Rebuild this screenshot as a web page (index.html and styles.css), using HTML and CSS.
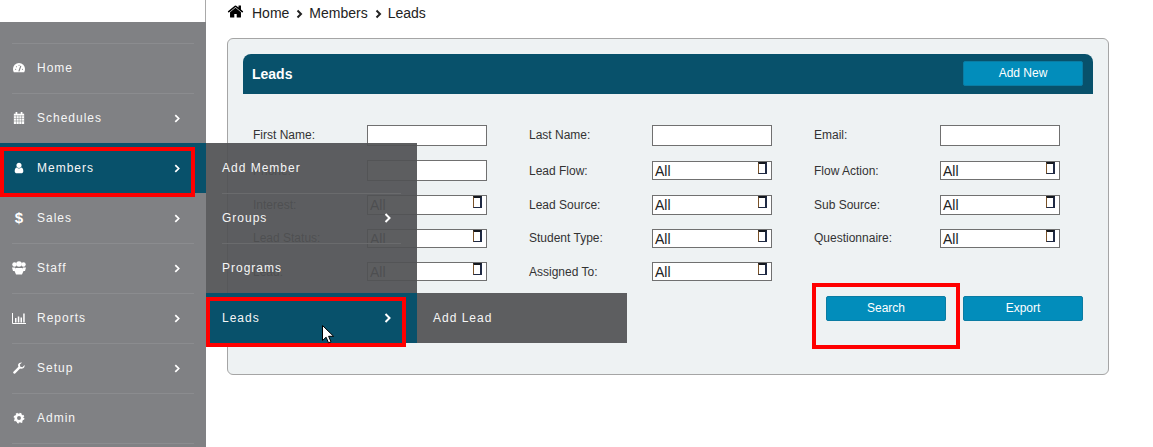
FILE: index.html
```html
<!DOCTYPE html>
<html lang="en">
<head>
<meta charset="utf-8">
<title>Leads</title>
<link rel="stylesheet" href="styles.css">
</head>
<body>
<div class="page">
  <aside class="sidebar">
    <div class="top-strip"></div>
    <nav class="nav">
      <ul class="menu">
        <li class="item"><a class="row">
          <svg class="icon" viewBox="0 0 14 14"><path class="fill" d="M1 12C.3 10.800 0 9.500 0 8.200a7 7 0 0 1 14 0c0 1.300-.3 2.600-1 3.800z"/><path class="cut" d="M7 10.500 9 5M3 8.500h.1M4 5.500h.1M7 3.800h.1M11 8.500h.1"/></svg>
          <span>Home</span></a></li>
        <li class="item"><a class="row">
          <svg class="icon" viewBox="0 0 14 14"><path class="fill" d="M1 2h12v12H1z"/><path class="fill" d="M3 0h2v3H3zM9 0h2v3H9z"/><path class="grid" d="M1 4.500h12M1 7.500h12M1 10.500h12M4 4v10M7 4v10M10 4v10"/></svg>
          <span>Schedules</span>
          <svg class="chev" viewBox="0 0 7 10"><path d="M1.500 1 5.500 5l-4 4"/></svg></a></li>
        <li class="item has-flyout"><a class="row active">
          <svg class="icon" viewBox="0 0 1792 1792"><path class="fill" d="M1536 1399q0 109-62.500 187t-150.500 78h-854q-88 0-150.500-78t-62.500-187q0-85 8.500-160.500t31.500-152 58.500-131 94-89 134.500-34.500q131 128 313 128t313-128q76 0 134.500 34.500t94 89 58.500 131 31.500 152 8.500 160.500zm-256-887q0 159-112.500 271.500t-271.500 112.500-271.500-112.500-112.500-271.500 112.500-271.500 271.500-112.500 271.500 112.500 112.500 271.500z"/></svg>
          <span>Members</span>
          <svg class="chev" viewBox="0 0 7 10"><path d="M1.500 1 5.500 5l-4 4"/></svg></a>
          <ul class="flyout">
            <li class="item"><a class="row first"><span>Add Member</span></a></li>
            <li class="item"><a class="row"><span>Groups</span>
              <svg class="chev" viewBox="0 0 7 10"><path d="M1.500 1 5.500 5l-4 4"/></svg></a></li>
            <li class="item"><a class="row"><span>Programs</span></a></li>
            <li class="item has-sub"><a class="row active"><span>Leads</span>
              <svg class="chev" viewBox="0 0 7 10"><path d="M1.500 1 5.500 5l-4 4"/></svg></a>
              <ul class="flyout sub">
                <li class="item"><a class="row first"><span>Add Lead</span></a></li>
              </ul>
            </li>
          </ul>
        </li>
        <li class="item"><a class="row">
          <span class="icon dollar">$</span>
          <span>Sales</span>
          <svg class="chev" viewBox="0 0 7 10"><path d="M1.500 1 5.500 5l-4 4"/></svg></a></li>
        <li class="item"><a class="row">
          <svg class="icon wide" viewBox="0 0 14 14"><circle class="fill" cx="2.500" cy="3.500" r="2.200"/><circle class="fill" cx="11.500" cy="3.500" r="2.200"/><circle class="fill" cx="7" cy="3" r="2.800"/><path class="fill" d="M0 6.500h3L4 10H1zM14 6.500h-3L10 10h3z"/><path class="fill" d="M3.500 7h7l1 3-1.500 3.500H4L2.500 10z"/></svg>
          <span>Staff</span>
          <svg class="chev" viewBox="0 0 7 10"><path d="M1.500 1 5.500 5l-4 4"/></svg></a></li>
        <li class="item"><a class="row">
          <svg class="icon wide" viewBox="0 0 14 14"><path class="line" d="M.5 2v10.500H14"/><path class="fill" d="M3 7h1.500v4.500H3zM5.800 5.500h1.500v6H5.800zM8.500 6.500H10v5H8.500zM11.200 2.500h1.500v9h-1.500z"/></svg>
          <span>Reports</span>
          <svg class="chev" viewBox="0 0 7 10"><path d="M1.500 1 5.500 5l-4 4"/></svg></a></li>
        <li class="item"><a class="row">
          <svg class="icon" viewBox="0 0 14 14"><path class="fill" d="M13.500 3.500 11 6 8.500 5.500 8 3l2.500-2.500C8.500.2 6.500 1 6 3c-.2.900 0 1.800.3 2.500L.8 11c-.8.800-.8 1.500-.2 2.200.7.600 1.400.6 2.200-.2l5.500-5.500c2.500 1 5.800-.8 5.200-4z"/></svg>
          <span>Setup</span>
          <svg class="chev" viewBox="0 0 7 10"><path d="M1.500 1 5.500 5l-4 4"/></svg></a></li>
        <li class="item"><a class="row">
          <svg class="icon" viewBox="0 0 14 14"><circle class="gear" cx="7" cy="7" r="3.800"/><circle class="teeth" cx="7" cy="7" r="5.400"/></svg>
          <span>Admin</span></a></li>
      </ul>
      <div class="menu-end"></div>
    </nav>
  </aside>

  <main class="main">
    <div class="crumbs">
      <svg class="crumb-home" viewBox="0 0 1792 1792"><path d="M1472 992v480q0 26-19 45t-45 19h-384v-384h-256v384h-384q-26 0-45-19t-19-45v-480q0-1 .5-3t.5-3l575-474 575 474q1 2 1 6zm223-69l-62 74q-8 9-21 11h-3q-13 0-21-7l-692-577-692 577q-12 8-24 7-13-2-21-11l-62-74q-8-10-7-23.500t11-21.500l719-599q32-26 76-26t76 26l244 204v-195q0-14 9-23t23-9h192q14 0 23 9t9 23v408l219 182q10 8 11 21.500t-7 23.500z"/></svg>
      <span>Home</span>
      <svg class="crumb-sep" viewBox="0 0 7 10"><path d="M1.500 1.500 5 5 1.500 8.500"/></svg>
      <span>Members</span>
      <svg class="crumb-sep" viewBox="0 0 7 10"><path d="M1.500 1.500 5 5 1.500 8.500"/></svg>
      <span>Leads</span>
    </div>

    <section class="panel">
      <header class="panel-head">
        <h1 class="panel-title">Leads</h1>
        <button class="btn">Add New</button>
      </header>

      <form class="form">
        <label class="lbl up">First Name:</label><input class="txt" type="text">
        <label class="lbl up col2">Last Name:</label><input class="txt" type="text">
        <label class="lbl up col3">Email:</label><input class="txt" type="text">

        <label class="lbl">Phone:</label><input class="txt" type="text">
        <label class="lbl col2">Lead Flow:</label><div class="sel inset"><span>All</span><i class="tofu"></i></div>
        <label class="lbl col3">Flow Action:</label><div class="sel inset"><span>All</span><i class="tofu"></i></div>

        <label class="lbl">Interest:</label><div class="sel"><span>All</span><i class="tofu"></i></div>
        <label class="lbl col2">Lead Source:</label><div class="sel"><span>All</span><i class="tofu"></i></div>
        <label class="lbl col3">Sub Source:</label><div class="sel"><span>All</span><i class="tofu"></i></div>

        <label class="lbl up">Lead Status:</label><div class="sel"><span>All</span><i class="tofu"></i></div>
        <label class="lbl up col2">Student Type:</label><div class="sel"><span>All</span><i class="tofu"></i></div>
        <label class="lbl up col3">Questionnaire:</label><div class="sel"><span>All</span><i class="tofu"></i></div>

        <label class="lbl">Lead:</label><div class="sel"><span>All</span><i class="tofu"></i></div>
        <label class="lbl col2">Assigned To:</label><div class="sel"><span>All</span><i class="tofu"></i></div>
      </form>

      <div class="actions">
        <button class="btn">Search</button>
        <button class="btn">Export</button>
      </div>
    </section>
  </main>
</div>

<div class="mark mark-members"></div>
<div class="mark mark-leads"></div>
<div class="mark mark-search"></div>
<svg class="cursor" viewBox="0 0 12 19"><path d="M.5.500v15l3.600-3.300 2.400 5.600 2.500-1-2.400-5.500h5z"/></svg>
</body>
</html>
```
FILE: styles.css
```css
* { box-sizing: border-box; }
html, body { margin: 0; padding: 0; height: 100%; overflow: hidden; }
body { font-family: "Liberation Sans", Arial, sans-serif; background: #fff; color: #222; }
ul { list-style: none; margin: 0; padding: 0; }

.page { display: flex; height: 447px; }

/* sidebar */
.sidebar { width: 206px; flex: none; display: flex; flex-direction: column; position: relative; z-index: 2; }
.top-strip { height: 22px; border-right: 1px solid #a9a9a9; }
.nav { flex: 1; background: #808184; padding-top: 21px; }
.item { height: 50px; padding: 0 12px; }
.item.has-flyout, .item.has-sub { position: relative; }
.row {
  display: flex; align-items: center; height: 100%;
  border-top: 1px solid #8b8c8f; padding-right: 10px; padding-bottom: 1px;
  font-size: 12px; letter-spacing: 1px; color: #f6f6f6;
}
.menu > .item > .row { padding-right: 11px; }
.menu > .has-flyout > .row.active { background: #08516b; margin: 0 -12px; padding-left: 12px; padding-right: 23px; border-top-color: #08516b; }
.menu-end { height: 1px; margin: 0 12px; background: #8b8c8f; }

.icon { width: 12px; height: 12px; flex: none; margin: 0 12px 0 1px; }
.icon.wide { width: 14px; height: 14px; margin: 0 11px 0 0; }
.fill { fill: #fff; }
.cut { fill: none; stroke: #808184; stroke-width: 1.300; stroke-linecap: round; }
.grid { fill: none; stroke: #808184; stroke-width: .6; }
.line { fill: none; stroke: #fff; stroke-width: 1; }
.gear { fill: none; stroke: #fff; stroke-width: 3; }
.teeth { fill: none; stroke: #fff; stroke-width: 1.800; stroke-dasharray: 2.100 2.140; }
.dollar { height: 14px; font-size: 15px; font-weight: 700; text-align: center; line-height: 14px; letter-spacing: 0; color: #fff; }
.chev { width: 7px; height: 10px; margin-left: auto; flex: none; }
.menu > .item > .row > .chev { width: 6px; height: 9px; margin-right: 3px; }
.chev path { fill: none; stroke: #fff; stroke-width: 2; }

/* flyouts */
.flyout { position: absolute; left: 206px; top: 0; width: 211px; background: rgba(81, 82, 84, .93); }
.flyout .item { padding: 0 16px; }
.flyout .row { border-top-color: #6a6b6d; }
.flyout .row.first { border-top-color: transparent; }
.has-sub > .row.active { background: #08516b; margin: 0 -16px; padding-left: 16px; padding-right: 26px; border-top-color: #08516b; }
.flyout.sub { left: 211px; width: 210px; background: #5d5e60; }

/* main */
.main { flex: 1; padding-left: 21px; min-width: 0; }
.crumbs { height: 38px; padding-bottom: 12px; display: flex; align-items: center; font-size: 14px; color: #222; }
.crumb-home { width: 17px; height: 17px; margin-right: 8px; fill: #000; position: relative; top: -2px; }
.crumb-sep { width: 7px; height: 10px; margin: 1px 6px 0 7px; }
.crumb-sep path { fill: none; stroke: #222; stroke-width: 2; }

.panel { width: 882px; height: 337px; background: #eef2f3; border: 1px solid #a5a5a5; border-radius: 6px; padding: 15px; }
.panel-head { height: 40px; background: #08516b; border-radius: 8px 8px 0 0; display: flex; justify-content: space-between; padding: 7px 10px 0 9px; }
.panel-title { margin: 5px 0 0; font-size: 14px; font-weight: 700; color: #fff; line-height: 16px; }

.btn {
  width: 120px; height: 25px; padding: 0 0 2px; background: #028dbb; border: 1px solid #0a7ca3; border-radius: 2px;
  color: #fff; font: 12px "Liberation Sans", Arial, sans-serif;
}

.form {
  margin-top: 31px; padding-left: 10px;
  display: grid;
  grid-template-columns: 114px 120px 42px 123px 120px 43px 125px 120px;
  grid-template-rows: 21px 21px 20px 19px 19px;
  row-gap: 14px;
}
.lbl { grid-column: 1; font-size: 12px; color: #333; align-self: center; line-height: 14px; }
.lbl.up { margin-bottom: 2px; }
.lbl.col2 { grid-column: 4; }
.lbl.col3 { grid-column: 7; margin-left: -1px; }
.txt { width: 120px; height: 21px; border: 1px solid #707070; background: #fff; margin: 0; padding: 0; border-radius: 0; }
.sel {
  display: flex; justify-content: space-between; align-items: flex-start;
  border: 1px solid #707070; background: #fff; padding: 0 4px 0 2px;
  font-size: 14px; line-height: 18px; color: #222;
}
.sel.inset { margin: 1px 0; }
.tofu { width: 9px; height: 12px; margin-top: 0; border: 1px solid #1f2a44; border-width: 2px 2px 1px 1px; border-top-color: #14181f; border-left-color: #7a5228; }

.actions { display: flex; justify-content: flex-end; gap: 17px; padding-right: 10px; margin-top: 15px; }

/* annotations */
.mark { position: absolute; z-index: 5; border: 4px solid #f00; }
.mark-members { left: 0; top: 147px; width: 195px; height: 50px; }
.mark-leads { left: 206px; top: 297px; width: 200px; height: 50px; }
.mark-search { left: 812px; top: 283px; width: 148px; height: 66px; }
.cursor { position: absolute; z-index: 6; left: 322px; top: 325px; width: 12px; height: 19px; }
.cursor path { fill: #fff; stroke: #000; stroke-width: 1; }
```
